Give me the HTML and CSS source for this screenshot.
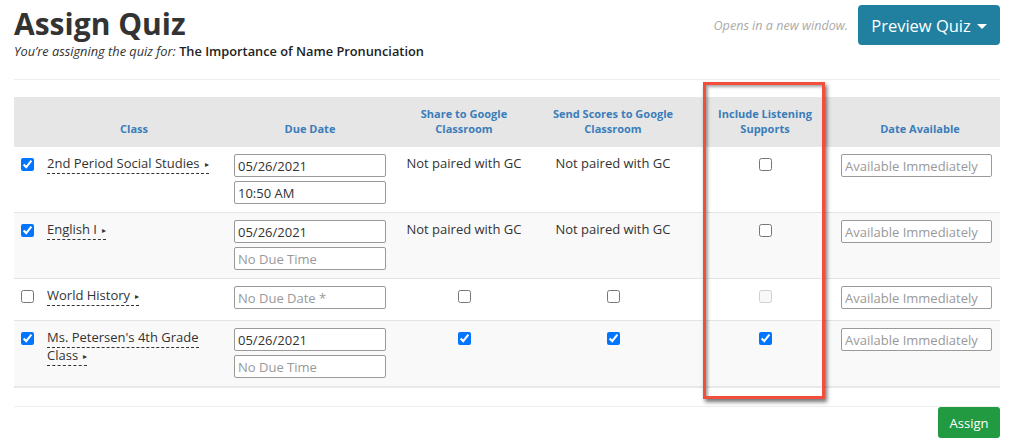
FILE: index.html
```html
<!DOCTYPE html>
<html>
<head>
<meta charset="utf-8">
<link rel="stylesheet" href="styles.css">
</head>
<body>
<div class="page">
  <div class="topbar">
    <div class="titles">
      <h1 class="title">Assign Quiz</h1>
      <div class="subtitle"><em>You’re assigning the quiz for:</em> <strong>The Importance of Name Pronunciation</strong></div>
    </div>
    <div class="actions">
      <span class="note">Opens in a new window.</span>
      <button class="preview">Preview Quiz <span class="caret"></span></button>
    </div>
  </div>
  <hr class="rule">
  <table class="grid">
    <colgroup>
      <col class="c-check"><col class="c-class"><col class="c-due"><col class="c-share"><col class="c-send"><col class="c-listen"><col class="c-avail">
    </colgroup>
    <thead>
      <tr>
        <th></th>
        <th>Class</th>
        <th>Due Date</th>
        <th>Share to Google<br>Classroom</th>
        <th>Send Scores to Google<br>Classroom</th>
        <th>Include Listening<br>Supports</th>
        <th>Date Available</th>
      </tr>
    </thead>
    <tbody>
      <tr>
        <td class="chk"><input type="checkbox" checked></td>
        <td class="cls"><span class="cname">2nd Period Social Studies <span class="tri">▸</span></span></td>
        <td class="due"><input class="field" value="05/26/2021"><input class="field" value="10:50 AM"></td>
        <td class="mid">Not paired with GC</td>
        <td class="mid">Not paired with GC</td>
        <td class="mid box"><input type="checkbox"></td>
        <td class="avail"><input class="field wide" placeholder="Available Immediately"></td>
      </tr>
      <tr class="alt">
        <td class="chk"><input type="checkbox" checked></td>
        <td class="cls"><span class="cname">English I <span class="tri">▸</span></span></td>
        <td class="due"><input class="field" value="05/26/2021"><input class="field" placeholder="No Due Time"></td>
        <td class="mid">Not paired with GC</td>
        <td class="mid">Not paired with GC</td>
        <td class="mid box"><input type="checkbox"></td>
        <td class="avail"><input class="field wide" placeholder="Available Immediately"></td>
      </tr>
      <tr>
        <td class="chk"><input type="checkbox"></td>
        <td class="cls"><span class="cname">World History <span class="tri">▸</span></span></td>
        <td class="due"><input class="field" placeholder="No Due Date *"></td>
        <td class="mid box"><input type="checkbox"></td>
        <td class="mid box"><input type="checkbox"></td>
        <td class="mid box"><input type="checkbox" disabled></td>
        <td class="avail"><input class="field wide" placeholder="Available Immediately"></td>
      </tr>
      <tr class="alt">
        <td class="chk"><input type="checkbox" checked></td>
        <td class="cls"><span class="cname">Ms. Petersen's 4th Grade Class <span class="tri">▸</span></span></td>
        <td class="due"><input class="field" value="05/26/2021"><input class="field" placeholder="No Due Time"></td>
        <td class="mid box"><input type="checkbox" checked></td>
        <td class="mid box"><input type="checkbox" checked></td>
        <td class="mid box"><input type="checkbox" checked></td>
        <td class="avail"><input class="field wide" placeholder="Available Immediately"></td>
      </tr>
    </tbody>
  </table>
  <div class="footer">
    <button class="assign">Assign</button>
  </div>
  <div class="highlight"></div>
</div>
</body>
</html>
```
FILE: styles.css
```css
* { box-sizing: border-box; }
html, body { margin: 0; padding: 0; background: #fff; }
body {
  font-family: "Open Sans", "Liberation Sans", sans-serif;
  font-size: 13px;
  color: #333;
}
.page {
  position: relative;
  padding: 5px 14px 0 14px;
}
.topbar {
  display: flex;
  justify-content: space-between;
  align-items: flex-start;
}
.title {
  margin: 0;
  font-size: 30px;
  line-height: 37px;
  font-weight: 700;
  color: #333;
}
.subtitle {
  margin-top: 1px;
  font-size: 12.8px;
  line-height: 16px;
}
.subtitle em { color: #333; }
.subtitle strong { font-weight: 600; color: #222; }
.actions {
  display: flex;
  align-items: center;
  gap: 10px;
}
.note {
  font-style: italic;
  color: #aaa;
  font-size: 12.6px;
}
.preview {
  font-family: "Open Sans", "Liberation Sans", sans-serif;
  background: #217fa0;
  color: #fff;
  border: none;
  border-radius: 4px;
  font-size: 16.5px;
  height: 40px;
  width: 142px;
  padding: 0 10px;
  display: flex;
  align-items: center;
  justify-content: center;
  gap: 6px;
}
.caret {
  width: 0; height: 0;
  border-left: 5px solid transparent;
  border-right: 5px solid transparent;
  border-top: 5px solid #fff;
  margin-top: 2px;
}
.rule {
  border: none;
  border-top: 1px solid #eee;
  margin: 20px 0 17px 0;
}
.grid {
  width: 986px;
  border-collapse: collapse;
  table-layout: fixed;
}
.c-check { width: 26px; }
.c-class { width: 188px; }
.c-due { width: 164px; }
.c-share { width: 144px; }
.c-send { width: 154px; }
.c-listen { width: 150px; }
.c-avail { width: 160px; }
.grid th {
  background: #e6e6e6;
  color: #3a7dba;
  font-size: 11px;
  font-weight: 700;
  line-height: 15px;
  height: 50px;
  vertical-align: bottom;
  padding: 0 2px 11px 2px;
  text-align: center;
}
.grid td {
  vertical-align: top;
  border-bottom: 1px solid #e4e4e4;
  padding: 7px 0 8px 0;
  height: 42px;
}
.grid tr.alt td { background: #f9f9f9; }
.grid tbody tr:last-child td { border-bottom: 2px solid #e8e8e8; }
.chk { text-align: center; }
.chk input, .box input {
  margin: 4px 0 0 0;
  width: 13px;
  height: 13px;
}
.cls {
  padding-left: 7px !important;
  padding-right: 18px !important;
  line-height: 18px;
}
.cname {
  border-bottom: 1px dashed #333;
  padding-bottom: 1px;
}
.tri {
  font-size: 8px;
  vertical-align: 1px;
  margin-left: 2px;
}
.due { padding-left: 6px !important; }
.field {
  display: block;
  width: 152px;
  height: 23px;
  margin: 0 0 4px 0;
  border: 1px solid #9a9a9a;
  border-radius: 2px;
  padding: 1px 3px;
  font-family: "Open Sans", "Liberation Sans", sans-serif;
  font-size: 13px;
  color: #333;
  background: #fff;
}
.field:last-child { margin-bottom: 0; }
.field::placeholder { color: #999; }
.wide { width: 151px; }
.avail { padding-left: 1px !important; }
.mid { text-align: center; line-height: 18px; }
.box { line-height: 13px; }
.footer {
  border-top: 1px solid #eee;
  margin-top: 18px;
  display: flex;
  justify-content: flex-end;
}
.assign {
  font-family: "Open Sans", "Liberation Sans", sans-serif;
  background: #229a42;
  color: #fff;
  border: none;
  border-radius: 3px;
  font-size: 13px;
  width: 62px;
  height: 31px;
}
.highlight {
  position: absolute;
  left: 703px;
  top: 82px;
  width: 122px;
  height: 317px;
  border: 3px solid #f24e3c;
  box-shadow: 2px 3px 4px rgba(0,0,0,0.55), inset 2px 2px 3px rgba(0,0,0,0.35);
  pointer-events: none;
}
```
